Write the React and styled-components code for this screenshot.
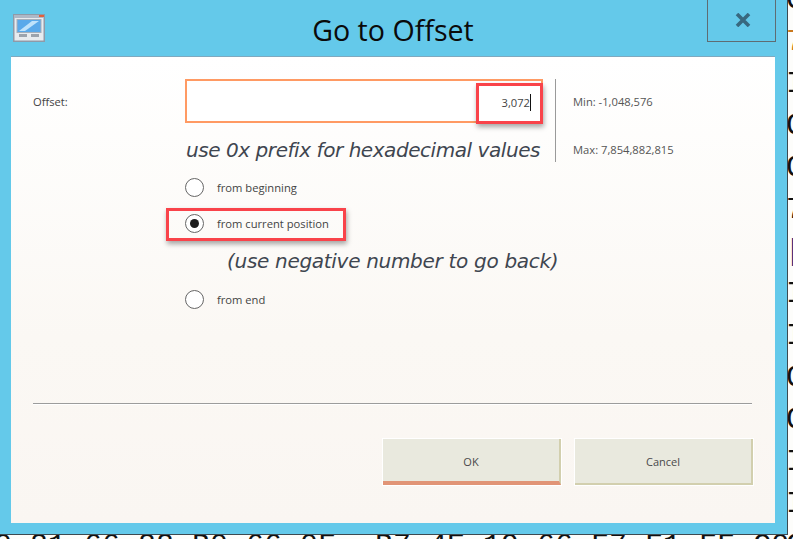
import React from 'react';
import styled, { createGlobalStyle } from 'styled-components';

const GlobalStyle = createGlobalStyle`
  html, body {
    margin: 0;
    padding: 0;
    background: #fdfdfb;
  }
  body {
    width: 793px;
    height: 539px;
    overflow: hidden;
    font-family: 'Open Sans', 'Liberation Sans', sans-serif;
  }
`;

const Screen = styled.div`
  position: relative;
  width: 793px;
  height: 539px;
  overflow: hidden;
`;

// hex dump of the main window, only its edges stick out behind the dialog
const HexRow = styled.div`
  position: absolute;
  left: -6px;
  top: 531px;
  display: flex;
  gap: 39px;
  font-family: 'Liberation Mono', monospace;
  font-size: 30px;
  line-height: 30px;
  white-space: pre;
  color: #111;
`;

const HexEdge = styled.div`
  position: absolute;
  left: 786px;
  top: -21px;
  display: flex;
  flex-direction: column;
  font-family: 'Liberation Mono', monospace;
  font-size: 30px;
  line-height: 42px;
`;

const HexChar = styled.div`
  height: 42px;
  color: ${props => props.$color || '#111'};
`;

const Window = styled.div`
  position: relative;
  box-sizing: border-box;
  width: 788px;
  height: 535px;
  background: #64c9ea;
  border-right: 1px solid #3d4a50;
  border-bottom: 1px solid #3d4a50;
  padding: 0 12px 11px 11px;
  display: flex;
  flex-direction: column;
`;

const TitleBar = styled.div`
  height: 57px;
  flex: none;
  display: flex;
  align-items: flex-start;
  position: relative;
`;

const AppIcon = styled.svg`
  width: 32px;
  height: 28px;
  margin: 14px 0 0 2px;
  filter: blur(0.4px);
`;

const Title = styled.div`
  position: absolute;
  left: 0;
  right: 0;
  top: 11px;
  text-align: center;
  font-size: 28.6px;
  line-height: 38px;
  color: #0a0a0a;
`;

const CloseBox = styled.div`
  position: absolute;
  right: -1px;
  top: -2px;
  box-sizing: border-box;
  width: 69px;
  height: 44px;
  border: 1px solid #5f6c72;
  display: flex;
  align-items: center;
  justify-content: center;
  padding-left: 2px;
`;

const Body = styled.div`
  flex: 1;
  box-sizing: border-box;
  background: linear-gradient(180deg, #ffffff 0%, #fbf8f4 60%, #faf6f2 100%);
  box-shadow: 0 -1px 0 #7fa9bf;
  padding: 22px 23px 0 22px;
  display: flex;
  flex-direction: column;
`;

const OffsetRow = styled.div`
  display: flex;
  align-items: flex-start;
`;

const Label = styled.div`
  width: 152px;
  flex: none;
  font-size: 11.2px;
  line-height: 14px;
  color: #444;
  padding-top: 16px;
`;

const InputColumn = styled.div`
  width: 358px;
  flex: none;
`;

const OffsetInput = styled.div`
  box-sizing: border-box;
  height: 44px;
  border: 2px solid #ff9a63;
  background: #fff;
  display: flex;
  align-items: center;
  justify-content: flex-end;
  padding: 2px 10px 0 0;
  font-size: 11.2px;
  color: #444;
`;

const Caret = styled.span`
  display: inline-block;
  width: 1px;
  height: 17px;
  background: #111;
`;

const Hint = styled.div`
  font-family: 'DejaVu Sans', sans-serif;
  font-style: italic;
  font-size: 20px;
  line-height: 28px;
  color: #3f4650;
  white-space: nowrap;
`;

const InputHint = styled(Hint)`
  margin: 13px 0 0 1px;
  letter-spacing: -0.44px;
`;

const Limits = styled.div`
  margin-left: 12px;
  box-sizing: border-box;
  height: 83px;
  border-left: 1px solid #9a9a9a;
  padding: 16px 0 0 17px;
  display: flex;
  flex-direction: column;
  gap: 34px;
  font-size: 11.2px;
  line-height: 14px;
  color: #555;
`;

const RadioList = styled.div`
  margin: 14px 0 0 152px;
  display: flex;
  flex-direction: column;
`;

const RadioRow = styled.div`
  height: 19px;
  display: flex;
  align-items: center;
  gap: 13px;
  font-size: 11.2px;
  color: #444;
  margin-bottom: ${props => props.$gap}px;
`;

const RadioCircle = styled.div`
  box-sizing: border-box;
  width: 19px;
  height: 19px;
  border-radius: 50%;
  border: 1px solid #666;
  background: #fff;
  display: flex;
  align-items: center;
  justify-content: center;

  &::after {
    content: '';
    display: ${props => (props.$checked ? 'block' : 'none')};
    width: 9px;
    height: 9px;
    border-radius: 50%;
    background: #1c1c1c;
  }
`;

const Callout = styled.div`
  position: absolute;
  box-sizing: border-box;
  border: 3px solid #f9434a;
  box-shadow: 1px 3px 5px rgba(0, 0, 0, 0.35);
  pointer-events: none;
`;

const InputCallout = styled(Callout)`
  left: 476px;
  top: 83px;
  width: 67px;
  height: 41px;
`;

const RadioCallout = styled(Callout)`
  left: 166px;
  top: 208px;
  width: 180px;
  height: 33px;
`;

const BackHint = styled(Hint)`
  margin: 13px 0 0 42px;
  letter-spacing: -0.3px;
  height: 44px;
  line-height: 30px;
`;

const Divider = styled.div`
  height: 1px;
  background: #9c9c9c;
  margin-top: 94px;
  box-shadow: 0 1px 0 #fff;
`;

const ButtonRow = styled.div`
  display: flex;
  justify-content: flex-end;
  gap: 14px;
  margin: 35px -1px 0 0;
`;

const Button = styled.div`
  box-sizing: border-box;
  width: 178px;
  height: 46px;
  background: #e9e9de;
  border-right: 2px solid #d2cfae;
  border-bottom: ${props => (props.$primary ? '4px solid #e19476' : '2px solid #d2cfae')};
  display: flex;
  align-items: center;
  justify-content: center;
  font-size: 11px;
  color: #4a4a4a;
  padding-top: ${props => (props.$primary ? '2px' : '0')};
  box-shadow: 0 0 0 1px #fff;
`;

const EDGE_CHARS = [
  ['C'], ['7', '#c9781e'], ['I'], ['C'], ['C'], ['7'], ['[', '#14247a'],
  ['I'], ['I'], ['C'], ['C'], ['I'], ['I'], ['C'],
];

export default function App() {
  return (
    <>
      <GlobalStyle />
      <Screen>
        <HexRow>
          <span>{'0 81 66 88 B0 66 0F'}</span>
          <span>{'B7 4E 19 66 F7 F1 FF C0'}</span>
        </HexRow>
        <HexEdge>
          {EDGE_CHARS.map(([ch, color], i) => (
            <HexChar key={i} $color={color}>{ch}</HexChar>
          ))}
        </HexEdge>
        <Window>
          <TitleBar>
            <AppIcon viewBox="0 0 32 28">
              <rect x="0.75" y="0.75" width="30.5" height="26.5" fill="#e8ebef" stroke="#8f9aa8" strokeWidth="1.5" />
              <rect x="1" y="1" width="30" height="3" fill="#aeb8c6" />
              <rect x="26" y="1" width="5" height="2" fill="#e2603c" />
              <rect x="4" y="5.5" width="24" height="13" fill="#5aa9ea" stroke="#a5afbb" />
              <path d="M6 17 L19 7 L26 7 L12 17 Z" fill="#bfe2fb" />
              <rect x="6" y="20" width="8" height="3" fill="#9ca3ad" />
              <rect x="18" y="20" width="8" height="3" fill="#9ca3ad" />
            </AppIcon>
            <Title>Go to Offset</Title>
            <CloseBox>
              <svg width="16" height="14" viewBox="0 0 16 14">
                <path d="M2 1 L14 13 M14 1 L2 13" stroke="#38687f" strokeWidth="3.6" fill="none" />
              </svg>
            </CloseBox>
          </TitleBar>
          <Body>
            <OffsetRow>
              <Label>Offset:</Label>
              <InputColumn>
                <OffsetInput>3,072<Caret /></OffsetInput>
                <InputHint>use 0x prefix for hexadecimal values</InputHint>
              </InputColumn>
              <Limits>
                <div>Min: -1,048,576</div>
                <div>Max: 7,854,882,815</div>
              </Limits>
            </OffsetRow>
            <RadioList>
              <RadioRow $gap={17}><RadioCircle />from beginning</RadioRow>
              <RadioRow $gap={0}><RadioCircle $checked />from current position</RadioRow>
              <BackHint>(use negative number to go back)</BackHint>
              <RadioRow $gap={0}><RadioCircle />from end</RadioRow>
            </RadioList>
            <Divider />
            <ButtonRow>
              <Button $primary>OK</Button>
              <Button>Cancel</Button>
            </ButtonRow>
          </Body>
          <InputCallout />
          <RadioCallout />
        </Window>
      </Screen>
    </>
  );
}
